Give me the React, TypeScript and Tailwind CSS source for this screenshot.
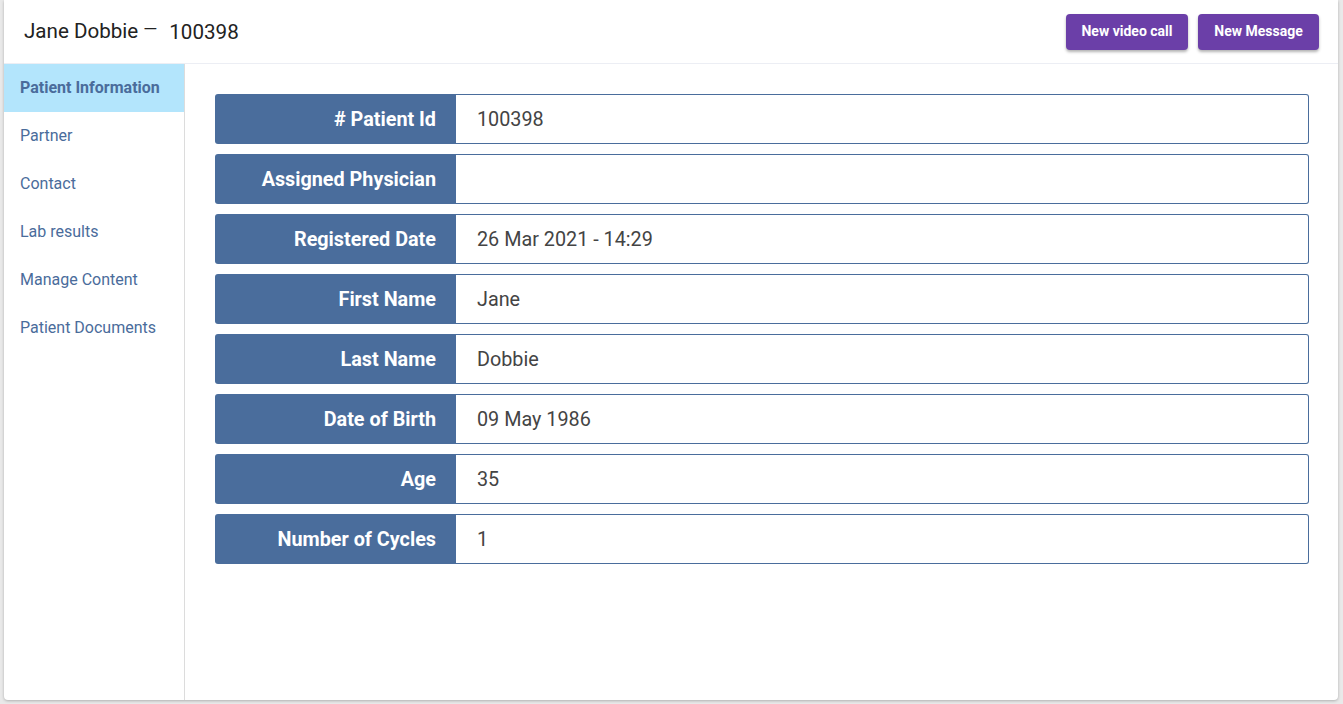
import React from "react";

const rows: [string, string][] = [
  ["# Patient Id", "100398"],
  ["Assigned Physician", ""],
  ["Registered Date", "26 Mar 2021 - 14:29"],
  ["First Name", "Jane"],
  ["Last Name", "Dobbie"],
  ["Date of Birth", "09 May 1986"],
  ["Age", "35"],
  ["Number of Cycles", "1"],
];

const nav = [
  "Patient Information",
  "Partner",
  "Contact",
  "Lab results",
  "Manage Content",
  "Patient Documents",
];

export default function App() {
  return (
    <div
      className="h-[704px] w-full bg-[#e9e9e9] overflow-hidden"
      style={{ fontFamily: "Roboto, 'Liberation Sans', sans-serif" }}
    >
      <div className="ml-[4px] mr-[5px] h-[700px] bg-white rounded-b-[4px] shadow-[0_1px_3px_rgba(0,0,0,0.25)] flex flex-col">
        <header className="h-[64px] flex items-center justify-between pl-[20px] pr-[19px] border-b border-[#eceef4] shrink-0">
          <div className="flex items-center text-[#222]">
            <span className="text-[20.6px]">Jane Dobbie</span>
            <span className="text-[18px] ml-[5px] mr-[12px] -translate-y-[3px] inline-block w-[14px] text-center">—</span>
            <span className="text-[20.6px] translate-y-[1px]">100398</span>
          </div>
          <div className="flex gap-[10px]">
            <button className="h-[36px] w-[122px] rounded-[4px] bg-[#6b3fa8] text-white text-[14px] font-bold shadow-[0_2px_3px_rgba(0,0,0,0.3)]">
              New video call
            </button>
            <button className="h-[36px] w-[121px] rounded-[4px] bg-[#6b3fa8] text-white text-[14px] font-bold shadow-[0_2px_3px_rgba(0,0,0,0.3)]">
              New Message
            </button>
          </div>
        </header>
        <div className="flex flex-1 min-h-0">
          <nav className="w-[181px] border-r border-[#dcdcdc] shrink-0">
            {nav.map((n, i) => (
              <div
                key={n}
                className={`h-[48px] flex items-center pl-[16px] text-[16px] text-[#4a6c9b] ${
                  i === 0 ? "bg-[#b3e5fc] font-bold" : ""
                }`}
              >
                {n}
              </div>
            ))}
          </nav>
          <main className="flex-1 pt-[30px] pl-[30px] pr-[29px]">
            <div className="flex flex-col gap-[10px]">
              {rows.map(([label, value]) => (
                <div key={label} className="flex h-[50px]">
                  <div className="w-[241px] shrink-0 bg-[#4a6d9c] rounded-l-[3px] flex items-center justify-end pr-[20px] pt-[2px] text-white text-[19.8px] font-bold">
                    {label}
                  </div>
                  <div className="flex-1 border border-l-0 border-[#4a6d9c] rounded-r-[3px] flex items-center pl-[21px] pt-[2px] text-[19.8px] text-[#444]">
                    {value}
                  </div>
                </div>
              ))}
            </div>
          </main>
        </div>
      </div>
    </div>
  );
}
